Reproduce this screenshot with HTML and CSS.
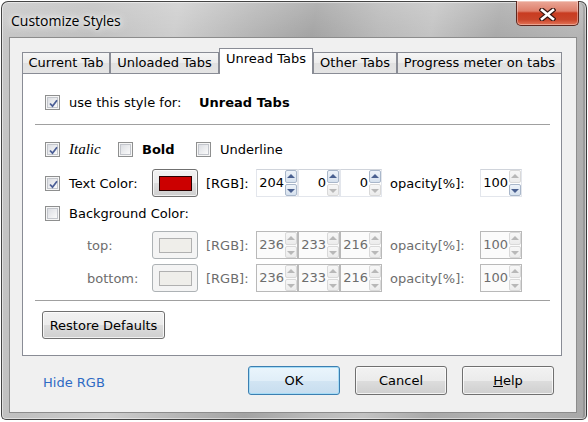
FILE: index.html
```html
<!DOCTYPE html>
<html>
<head>
<meta charset="utf-8">
<title>Customize Styles</title>
<link rel="stylesheet" href="styles.css">
</head>
<body>
<div class="window">
  <div class="titlebar">
    <span class="title">Customize Styles</span>
    <div class="close">
      <svg width="17" height="13" viewBox="0 0 17 13">
        <path d="M3 2 L14 11 M14 2 L3 11" stroke="#3a1712" stroke-width="5" stroke-linecap="square" fill="none"/>
        <path d="M3 2 L14 11 M14 2 L3 11" stroke="#ffffff" stroke-width="2.6" stroke-linecap="square" fill="none"/>
      </svg>
    </div>
  </div>
  <div class="client">
    <div class="tabs">
      <div class="tab t1">Current Tab</div>
      <div class="tab t2">Unloaded Tabs</div>
      <div class="tab t3 active">Unread Tabs</div>
      <div class="tab t4">Other Tabs</div>
      <div class="tab t5">Progress meter on tabs</div>
    </div>
    <div class="panel">
      <div class="row row-use">
        <span class="cb checked"><svg width="11" height="11" viewBox="0 0 11 11"><path d="M2 5.5 L4.5 8.2 L9 2.3" stroke="#4b5e96" stroke-width="1.8" fill="none"/></svg></span>
        <span class="use-lbl">use this style for:</span>
        <b class="target">Unread Tabs</b>
      </div>
      <div class="sep sep1"></div>
      <div class="row row-style">
        <span class="opt opt-italic"><span class="cb checked"><svg width="11" height="11" viewBox="0 0 11 11"><path d="M2 5.5 L4.5 8.2 L9 2.3" stroke="#4b5e96" stroke-width="1.8" fill="none"/></svg></span><i class="italic">Italic</i></span>
        <span class="opt opt-bold"><span class="cb"></span><b>Bold</b></span>
        <span class="opt"><span class="cb"></span><span>Underline</span></span>
      </div>
      <div class="row row-text">
        <span class="col1"><span class="cb checked"><svg width="11" height="11" viewBox="0 0 11 11"><path d="M2 5.5 L4.5 8.2 L9 2.3" stroke="#4b5e96" stroke-width="1.8" fill="none"/></svg></span><span>Text Color:</span></span>
        <span class="colorbtn"><span class="swatch red"></span></span>
        <span class="rgb">[RGB]:</span>
        <span class="spin"><span class="field">204</span><span class="arrows"><i class="up"></i><i class="dn"></i></span></span>
        <span class="spin"><span class="field">0</span><span class="arrows"><i class="up"></i><i class="dn off"></i></span></span>
        <span class="spin"><span class="field">0</span><span class="arrows"><i class="up"></i><i class="dn off"></i></span></span>
        <span class="opacity">opacity[%]:</span>
        <span class="spin"><span class="field">100</span><span class="arrows"><i class="up off"></i><i class="dn"></i></span></span>
      </div>
      <div class="row row-bg">
        <span class="col1"><span class="cb"></span><span>Background Color:</span></span>
      </div>
      <div class="row row-top disabled">
        <span class="col1 sub">top:</span>
        <span class="colorbtn dis"><span class="swatch pale"></span></span>
        <span class="rgb">[RGB]:</span>
        <span class="spin dis"><span class="field">236</span><span class="arrows"><i class="up off"></i><i class="dn off"></i></span></span>
        <span class="spin dis"><span class="field">233</span><span class="arrows"><i class="up off"></i><i class="dn off"></i></span></span>
        <span class="spin dis"><span class="field">216</span><span class="arrows"><i class="up off"></i><i class="dn off"></i></span></span>
        <span class="opacity">opacity[%]:</span>
        <span class="spin dis"><span class="field">100</span><span class="arrows"><i class="up off"></i><i class="dn off"></i></span></span>
      </div>
      <div class="row row-bottom disabled">
        <span class="col1 sub">bottom:</span>
        <span class="colorbtn dis"><span class="swatch pale"></span></span>
        <span class="rgb">[RGB]:</span>
        <span class="spin dis"><span class="field">236</span><span class="arrows"><i class="up off"></i><i class="dn off"></i></span></span>
        <span class="spin dis"><span class="field">233</span><span class="arrows"><i class="up off"></i><i class="dn off"></i></span></span>
        <span class="spin dis"><span class="field">216</span><span class="arrows"><i class="up off"></i><i class="dn off"></i></span></span>
        <span class="opacity">opacity[%]:</span>
        <span class="spin dis"><span class="field">100</span><span class="arrows"><i class="up off"></i><i class="dn off"></i></span></span>
      </div>
      <div class="sep sep2"></div>
      <div class="btn restore">Restore Defaults</div>
    </div>
    <div class="footer">
      <span class="link">Hide RGB</span>
      <div class="buttons">
        <div class="btn fbtn default">OK</div>
        <div class="btn fbtn">Cancel</div>
        <div class="btn fbtn"><span><u>H</u>elp</span></div>
      </div>
    </div>
  </div>
</div>
</body>
</html>
```

FILE: styles.css
```css
* { box-sizing: border-box; }
html, body { margin: 0; padding: 0; background: #ffffff; }
body {
  width: 588px;
  height: 422px;
  overflow: hidden;
  font-family: "DejaVu Sans", Verdana, sans-serif;
  font-size: 13px;
  color: #000;
}

.window {
  margin: 1px 0 0 1px;
  width: 586px;
  height: 419px;
  border: 1px solid #444;
  border-right-color: #3a3a3a;
  border-radius: 7px 7px 5px 5px;
  background:
    linear-gradient(to bottom, rgba(255,255,255,0.18), rgba(255,255,255,0) 36px),
    linear-gradient(100deg, #c6c6c6 0%, #c0c0c0 14%, #cdcdcd 27%, #b6b6b6 38%, #a3a3a3 48%, #b9b9b9 58%, #c3c3c3 66%, #a9a9a9 76%, #b4b4b4 88%, #a8a8a8 100%);
  box-shadow: inset 0 0 0 1px rgba(255,255,255,0.5), inset -3px 0 0 rgba(0,0,0,0.12);
  padding: 0 9px 6px 7px;
  display: flex;
  flex-direction: column;
}

.titlebar {
  height: 35px;
  display: flex;
  align-items: flex-start;
}
.title {
  font-family: "Open Sans", "Noto Sans", sans-serif;
  font-size: 14px;
  line-height: 20px;
  margin: 9px 0 0 2px;
  color: #000;
  text-shadow: 0 0 8px rgba(255,255,255,0.95), 0 0 12px rgba(255,255,255,0.9), 0 0 4px rgba(255,255,255,0.8);
}
.close {
  margin-left: auto;
  margin-right: -2px;
  margin-top: -1px;
  width: 63px;
  height: 25px;
  border: 1px solid #5e271e;
  border-top: none;
  border-radius: 0 0 5px 5px;
  background: linear-gradient(to bottom, #eba898 0%, #de7f6b 42%, #c83b20 50%, #c9452a 78%, #e47658 100%);
  box-shadow: inset 0 0 0 1px rgba(255,255,255,0.35);
  display: flex;
  align-items: center;
  justify-content: center;
  padding-top: 2px;
}
.close svg { display: block; }

.client {
  height: 376px;
  background: #f0f0f0;
  border: 1px solid #8c8c8c;
  display: flex;
  flex-direction: column;
}

.tabs {
  margin: 10px 0 0 12px;
  height: 25px;
  display: flex;
  align-items: flex-end;
  position: relative;
  z-index: 1;
}
.tab {
  height: 21px;
  border: 1px solid #898c95;
  border-bottom: none;
  background: linear-gradient(to bottom, #f6f6f6 0%, #ececec 50%, #e1e1e1 51%, #e4e4e4 100%);
  text-align: center;
  line-height: 19px;
  white-space: nowrap;
}
.tab.active {
  height: 26px;
  margin-bottom: -1px;
  background: #ffffff;
  line-height: 20px;
}
.t1 { width: 88px; }
.t2 { width: 109px; }
.t3 { width: 94px; }
.t4 { width: 84px; }
.t5 { width: 165px; }

.panel {
  margin-left: 12px;
  width: 540px;
  height: 283px;
  border: 1px solid #898c95;
  background: #fff;
  padding: 14px 11px 0 12px;
  display: flex;
  flex-direction: column;
}

.row {
  display: flex;
  align-items: center;
  height: 28px;
  padding-left: 10px;
  white-space: nowrap;
  flex: none;
}
.sep { height: 1px; background: #a0a0a0; flex: none; }
.sep1 { margin-top: 8px; }
.row-style { margin-top: 10px; }
.row-text { margin-top: 6px; }
.row-bg { margin-top: 2px; }
.row-top { margin-top: 4px; }
.row-bottom { margin-top: 5px; }
.sep2 { margin-top: 8px; }

.cb {
  width: 15px;
  height: 15px;
  flex: none;
  border: 1px solid #8e8f8f;
  background: #f6f6f6;
  padding: 1px;
  margin-right: 9px;
  display: flex;
}
.cb::before {
  content: "";
  flex: 1;
  border: 1px solid #c3c6cc;
  background: linear-gradient(135deg, #dcdee3 0%, #eeeff1 60%, #fafafa 100%);
}
.cb.checked { position: relative; }
.cb svg { position: absolute; left: 2px; top: 2px; }

.use-lbl { width: 130px; }
.target { font-weight: bold; }

.opt { display: flex; align-items: center; }
.opt-italic { width: 73px; }
.opt-bold { width: 78px; }
.italic {
  font-family: "Liberation Serif", "Times New Roman", serif;
  font-size: 15px;
  font-style: italic;
}
.opt-bold b { font-weight: bold; }

.col1 { width: 107px; display: flex; align-items: center; flex: none; }
.col1.sub { padding-left: 42px; }

.colorbtn {
  width: 46px;
  height: 28px;
  flex: none;
  border: 1px solid #707070;
  border-radius: 3px;
  background: linear-gradient(to bottom, #f2f2f2 0%, #ebebeb 50%, #dddddd 51%, #cfcfcf 100%);
  box-shadow: inset 0 0 0 1px rgba(255,255,255,0.7);
  padding: 6px 5px 5px 6px;
  display: flex;
}
.swatch { flex: 1; border: 1px solid #2a0000; }
.swatch.red { background: #cc0000; }
.colorbtn.dis {
  border-color: #adb2b5;
  background: #f4f4f4;
  box-shadow: none;
}
.swatch.pale { background: #efeeea; border-color: #b0b0b0; }

.rgb { width: 58px; padding-left: 8px; flex: none; }
.opacity { width: 98px; padding-left: 8px; flex: none; }

.spin {
  width: 42px;
  height: 28px;
  flex: none;
  display: flex;
  background: #fff;
  border: 1px solid #e3e6ec;
  border-top-color: #d0d4db;
}
.field {
  flex: 1;
  text-align: right;
  line-height: 26px;
  padding-right: 1px;
}
.arrows {
  width: 12px;
  display: flex;
  flex-direction: column;
  gap: 1px;
}
.arrows i {
  flex: 1;
  position: relative;
  border: 1px solid #a9b7ca;
  border-radius: 2px;
  background: linear-gradient(to bottom, #eef3f9, #d6e1ee);
}
.arrows i::after {
  content: "";
  position: absolute;
  left: 1px;
  top: 3px;
  border-left: 4px solid transparent;
  border-right: 4px solid transparent;
}
.arrows i.up::after { border-bottom: 4px solid #4a6090; }
.arrows i.dn::after { border-top: 4px solid #4a6090; top: 4px; }
.arrows i.off {
  border-color: #d9d9d9;
  background: linear-gradient(to bottom, #f7f7f7, #ececec);
}
.arrows i.up.off::after { border-bottom-color: #b8b8b8; }
.arrows i.dn.off::after { border-top-color: #b8b8b8; }

.spin.dis { border: 1px solid #b9b9b9; background: #fbfbfb; }

.disabled { color: #6d6d6d; }

.btn {
  height: 28px;
  border: 1px solid #707070;
  border-radius: 3px;
  background: linear-gradient(to bottom, #f2f2f2 0%, #ebebeb 50%, #dddddd 51%, #cfcfcf 100%);
  box-shadow: inset 0 0 0 1px rgba(255,255,255,0.75);
  display: flex;
  align-items: center;
  justify-content: center;
  white-space: nowrap;
  flex: none;
}
.restore {
  width: 123px;
  margin: 10px 0 0 7px;
}

.footer {
  margin-top: 10px;
  height: 29px;
  display: flex;
  align-items: center;
  padding: 0 22px 0 33px;
}
.link { color: #2f6bc4; margin-top: 3px; }
.buttons { margin-left: auto; display: flex; gap: 15px; }
.fbtn { width: 92px; height: 29px; }
.fbtn.default {
  border-color: #3c7fb1;
  box-shadow: inset 0 0 0 1px #a6dcf6;
  background: linear-gradient(to bottom, #eaf5fc 0%, #e0eef8 50%, #d2e5f3 51%, #c7ddef 100%);
}
.fbtn u { text-decoration: underline; }
```
